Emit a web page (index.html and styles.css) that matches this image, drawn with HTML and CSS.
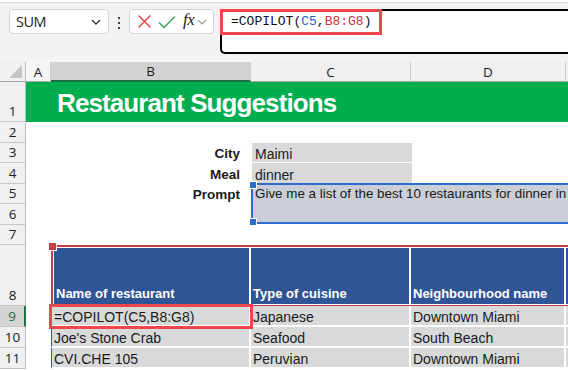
FILE: index.html
```html
<!DOCTYPE html>
<html lang="en">
<head>
  <meta charset="UTF-8">
  <title>Restaurant Suggestions</title>
  <link rel="stylesheet" href="styles.css">
</head>
<body>
  <div class="ribbon-edge"></div>

  <div class="formula-row">
    <div class="name-box">
      <span>SUM</span>
      <svg class="chev" width="10" height="6" viewBox="0 0 10 6"><path d="M1 1 L5 5 L9 1" fill="none" stroke="#333" stroke-width="1.3"/></svg>
    </div>
    <div class="kebab"><i></i><i></i><i></i></div>
    <div class="fx-box">
      <svg width="15" height="15" viewBox="0 0 15 15"><path d="M1.5 1.5 L13.5 13.5 M13.5 1.5 L1.5 13.5" stroke="#e23b3b" stroke-width="1.4"/></svg>
      <svg width="18" height="14" viewBox="0 0 18 14"><path d="M1 7.5 L6 12.5 L17 1.5" fill="none" stroke="#3aa35a" stroke-width="1.5"/></svg>
      <span class="fx">fx</span>
      <svg class="chev-light" width="10" height="6" viewBox="0 0 10 6"><path d="M1 1 L5 5 L9 1" fill="none" stroke="#999" stroke-width="1.2"/></svg>
    </div>
    <div class="formula-bar">
      <div class="formula-hl">=COPILOT(<span class="tok-blue">C5</span>,<span class="tok-red">B8:G8</span>)</div>
    </div>
  </div>

  <div class="sheet">
    <div class="row h-hdr">
      <div class="rh corner"><span class="tri"></span></div>
      <div class="ch col-a">A</div>
      <div class="ch col-b active">B</div>
      <div class="ch col-c">C</div>
      <div class="ch col-d">D</div>
      <div class="ch col-e"></div>
    </div>

    <div class="row h-40">
      <div class="rh">1</div>
      <div class="title">Restaurant Suggestions</div>
    </div>

    <div class="row h-21">
      <div class="rh">2</div>
    </div>

    <div class="row h-20">
      <div class="rh">3</div>
      <div class="cell col-a"></div>
      <div class="cell col-b label">City</div>
      <div class="cell col-c input">Maimi</div>
    </div>

    <div class="row h-21">
      <div class="rh">4</div>
      <div class="cell col-a"></div>
      <div class="cell col-b label">Meal</div>
      <div class="cell col-c input">dinner</div>
    </div>

    <div class="row-pair">
      <div class="pair-left">
        <div class="row h-20">
          <div class="rh">5</div>
          <div class="cell col-a"></div>
          <div class="cell col-b label">Prompt</div>
        </div>
        <div class="row h-21">
          <div class="rh">6</div>
          <div class="cell col-a"></div>
          <div class="cell col-b"></div>
        </div>
      </div>
      <div class="prompt"><span class="prompt-text">Give me a list of the best 10 restaurants for dinner in</span></div>
    </div>

    <div class="row h-20">
      <div class="rh">7</div>
    </div>

    <div class="row h-61">
      <div class="rh">8</div>
      <div class="cell col-a"></div>
      <div class="ref-range">
        <div class="th col-b">Name of restaurant</div>
        <div class="th col-c">Type of cuisine</div>
        <div class="th col-d">Neighbourhood name</div>
        <div class="th col-e"></div>
      </div>
    </div>

    <div class="row h-21">
      <div class="rh active">9</div>
      <div class="cell col-a"></div>
      <div class="td col-b editing">=COPILOT(C5,B8:G8)</div>
      <div class="td col-c">Japanese</div>
      <div class="td col-d">Downtown Miami</div>
      <div class="td col-e"></div>
    </div>

    <div class="row h-21">
      <div class="rh">10</div>
      <div class="cell col-a"></div>
      <div class="td col-b">Joe's Stone Crab</div>
      <div class="td col-c">Seafood</div>
      <div class="td col-d">South Beach</div>
      <div class="td col-e"></div>
    </div>

    <div class="row h-21">
      <div class="rh">11</div>
      <div class="cell col-a"></div>
      <div class="td col-b">CVI.CHE 105</div>
      <div class="td col-c">Peruvian</div>
      <div class="td col-d">Downtown Miami</div>
      <div class="td col-e"></div>
    </div>
  </div>
</body>
</html>
```

FILE: styles.css
```css
* {
  box-sizing: border-box;
}
body {
  margin: 0;
  width: 568px;
  height: 370px;
  overflow: hidden;
  background: #fff;
  font-family: 'Liberation Sans', Arial, sans-serif;
  color: #1a1a1a;
}

/* toolbar */
.ribbon-edge {
  height: 3px;
  background: #fff;
  border-bottom: 1px solid #d9d9d9;
}
.formula-row {
  display: flex;
  align-items: flex-start;
  height: 59px;
  padding: 6px 0 0 9px;
  background: #f3f3f3;
}
.name-box {
  display: flex;
  align-items: center;
  justify-content: space-between;
  width: 100px;
  height: 25px;
  padding: 0 7px 0 6px;
  background: #fff;
  border: 1px solid #d4d4d4;
  border-radius: 4px;
  font-family: 'Open Sans', sans-serif;
  font-size: 14.5px;
  letter-spacing: -0.5px;
  color: #222;
}
.kebab {
  display: flex;
  flex-direction: column;
  gap: 3px;
  margin: 8px 9px 0 9px;
}
.kebab i {
  display: block;
  width: 2px;
  height: 2px;
  background: #444;
}
.fx-box {
  display: flex;
  align-items: center;
  width: 85px;
  height: 25px;
  padding-left: 7px;
  background: #fff;
  border: 1px solid #d4d4d4;
  border-radius: 4px;
}
.fx-box svg {
  margin-right: 6px;
}
.fx {
  font-family: 'Liberation Serif', serif;
  font-style: italic;
  font-size: 17px;
  color: #222;
  margin: -3px 3px 0 1px;
  letter-spacing: -0.5px;
}
.fx-box .chev-light {
  margin-right: 0;
}
.formula-bar {
  flex: 1;
  height: 45px;
  margin-left: 6px;
  background: #fff;
  border: 2px solid #000;
  border-right: none;
  border-bottom-left-radius: 5px;
}
.formula-hl {
  width: 162px;
  height: 26px;
  margin: -2px 0 0 -2px;
  padding-left: 8px;
  border: 3px solid #f0454a;
  font-family: 'Liberation Mono', monospace;
  font-size: 13px;
  line-height: 20px;
  color: #111;
}
.tok-blue {
  color: #1c64c8;
}
.tok-red {
  color: #c8353b;
}

/* sheet */
.row {
  display: flex;
}
.h-hdr { height: 20px; }
.h-40 { height: 40px; }
.h-20 { height: 20px; }
.h-21 { height: 21px; }
.h-61 { height: 61px; }

.col-a { width: 25px; }
.col-b { width: 200px; }
.col-c { width: 160px; }
.col-d { width: 155px; }
.col-e { flex: 1; }

.rh {
  flex: none;
  display: flex;
  align-items: flex-end;
  justify-content: center;
  width: 26px;
  padding-bottom: 1px;
  background: #f0f0f0;
  border-right: 1px solid #bdbdbd;
  border-bottom: 1px solid #c6c6c6;
  font-family: 'Open Sans', sans-serif;
  font-size: 13.5px;
  line-height: 17px;
  color: #222;
}
.rh.active {
  background: #d3d3d3;
  border-right: 2px solid #1e7145;
  color: #1e6b40;
}
.corner {
  position: relative;
  border-bottom: 1px solid #a9a9a9;
}
.tri {
  position: absolute;
  right: 3px;
  bottom: 3px;
  width: 0;
  height: 0;
  border-left: 13px solid transparent;
  border-bottom: 13px solid #c4c4c4;
}
.ch {
  flex: none;
  display: flex;
  align-items: center;
  justify-content: center;
  background: #f0f0f0;
  border-right: 1px solid #cbcbcb;
  border-bottom: 1px solid #a9a9a9;
  font-family: 'Open Sans', sans-serif;
  font-size: 13.5px;
  color: #222;
}
.ch.col-a {
  background: #f6f6f6;
}
.ch.active {
  background: #d3d3d3;
  border-bottom: 2px solid #1e7145;
}
.ch.col-e {
  flex: 1;
  border-right: none;
}

.title {
  flex: 1;
  display: flex;
  align-items: flex-end;
  padding: 0 0 4px 31px;
  background: #00ad4f;
  color: #fff;
  font-weight: bold;
  font-size: 26px;
  line-height: 30px;
  letter-spacing: -0.9px;
}

.cell {
  flex: none;
  display: flex;
  align-items: flex-end;
  padding-left: 3px;
  font-size: 14px;
  line-height: 16px;
}
.label {
  justify-content: flex-end;
  padding-right: 11px;
  padding-bottom: 1px;
  font-weight: bold;
  font-size: 13.5px;
}
.input {
  background: #d9d9d9;
  border-bottom: 1px solid #fff;
  margin-left: 1px;
}

.row-pair {
  display: flex;
}
.prompt {
  position: relative;
  flex: 1;
  min-width: 0;
  height: 41px;
  margin-top: -1px;
  padding: 1px 0 0 2px;
  background: #cbced6;
  border: 2px solid #2f6bc8;
  border-right: none;
  font-size: 13.4px;
  line-height: 16px;
}
.prompt-text {
  display: block;
  white-space: nowrap;
  overflow: hidden;
}
.prompt::before,
.prompt::after {
  content: "";
  position: absolute;
  left: -4px;
  width: 6px;
  height: 6px;
  background: #2f6bc8;
  border: 1px solid #fff;
}
.prompt::before {
  top: -4px;
}
.prompt::after {
  bottom: -4px;
}

.ref-range {
  position: relative;
  flex: 1;
  display: flex;
  padding: 1px 0 1px 1px;
  border-top: 2px solid #c43e48;
  border-left: 2px solid #c43e48;
  border-bottom: 1px solid #c43e48;
}
.ref-range::before {
  content: "";
  position: absolute;
  left: -5px;
  top: -5px;
  width: 7px;
  height: 7px;
  background: #c43e48;
  border: 1px solid #fff;
}
.ref-range .col-b {
  width: 197px;
}
.th {
  flex: none;
  display: flex;
  align-items: flex-end;
  padding: 0 0 2px 2px;
  background: #2f5597;
  border-right: 2px solid #fff;
  color: #fff;
  font-weight: bold;
  font-size: 13px;
  line-height: 16px;
}
.th.col-e {
  flex: 1;
  border-right: none;
}
.td {
  flex: none;
  display: flex;
  align-items: flex-end;
  padding-left: 2px;
  background: #d9d9d9;
  border-right: 2px solid #fff;
  border-bottom: 2px solid #fff;
  font-size: 14px;
  line-height: 16px;
  white-space: nowrap;
  overflow: hidden;
}
.td.col-b {
  border-left: 1px solid #3d5b92;
}
.td.col-e {
  flex: 1;
  border-right: none;
}
.editing {
  position: relative;
  overflow: visible;
  outline: 3px solid #f0454a;
  outline-offset: -1px;
  background: #d9d9d9;
}
```
